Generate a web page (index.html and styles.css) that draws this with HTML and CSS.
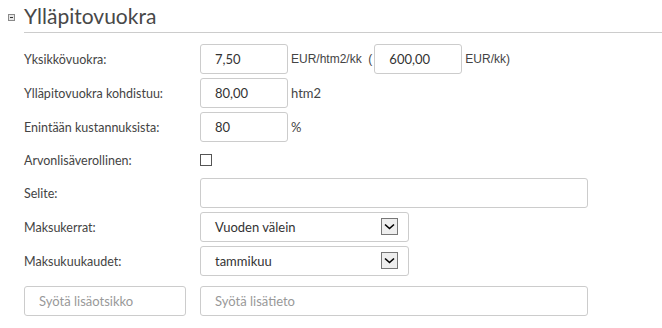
FILE: index.html
```html
<!DOCTYPE html>
<html lang="fi">
<head>
  <meta charset="UTF-8" />
  <title>Ylläpitovuokra</title>
  <link rel="stylesheet" href="styles.css">
</head>
<body>
  <div class="section">
    <div class="section-head">
      <span class="toggle"></span>
      <h2 class="title">Ylläpitovuokra</h2>
    </div>

    <div class="row">
      <label class="label">Yksikkövuokra:</label>
      <input class="field small" type="text" value="7,50">
      <span class="unit plain">EUR/htm2/kk&nbsp;&nbsp;(</span>
      <input class="field small" type="text" value="600,00">
      <span class="unit plain">EUR/kk)</span>
    </div>

    <div class="row">
      <label class="label">Ylläpitovuokra kohdistuu:</label>
      <input class="field small" type="text" value="80,00">
      <span class="unit">htm2</span>
    </div>

    <div class="row">
      <label class="label">Enintään kustannuksista:</label>
      <input class="field small" type="text" value="80">
      <span class="unit">%</span>
    </div>

    <div class="row check-row">
      <label class="label">Arvonlisäverollinen:</label>
      <span class="checkbox"></span>
    </div>

    <div class="row">
      <label class="label">Selite:</label>
      <input class="field wide" type="text">
    </div>

    <div class="row">
      <label class="label">Maksukerrat:</label>
      <div class="field select">
        <span>Vuoden välein</span>
        <span class="arrow"><svg width="11" height="7" viewBox="0 0 11 7"><path d="M1 1.5 L5.5 5.5 L10 1.5" fill="none" stroke="#000" stroke-width="1.6"/></svg></span>
      </div>
    </div>

    <div class="row">
      <label class="label">Maksukuukaudet:</label>
      <div class="field select">
        <span>tammikuu</span>
        <span class="arrow"><svg width="11" height="7" viewBox="0 0 11 7"><path d="M1 1.5 L5.5 5.5 L10 1.5" fill="none" stroke="#000" stroke-width="1.6"/></svg></span>
      </div>
    </div>

    <div class="row extra-row">
      <input class="field extra-title" type="text" placeholder="Syötä lisäotsikko">
      <input class="field wide" type="text" placeholder="Syötä lisätieto">
    </div>
  </div>
</body>
</html>
```

FILE: styles.css
```css
body {
  margin: 0;
  background: #fff;
  font-family: Lato, "Noto Sans", sans-serif;
  color: #333;
}
.section {
  padding: 0 0 0 24px;
}
.section-head {
  display: flex;
  align-items: center;
  margin-left: -16px;
  margin-bottom: 11px;
}
.toggle {
  position: relative;
  width: 5px;
  height: 5px;
  border: 1px solid #8a8a8a;
  background: #e6e6e6;
  margin-right: 9px;
  margin-top: 1px;
}
.toggle::after {
  content: "";
  position: absolute;
  left: 1px;
  right: 1px;
  top: 2px;
  height: 1px;
  background: #333;
}
.title {
  flex: 1;
  margin: 0;
  padding: 3px 0 4px;
  font-size: 21px;
  font-weight: normal;
  color: #484848;
  border-bottom: 1px solid #ccc;
}
.row {
  display: flex;
  align-items: center;
  height: 30px;
  margin-bottom: 4px;
}
.label {
  width: 176px;
  font-size: 12.5px;
  color: #444;
}
.field {
  box-sizing: border-box;
  height: 30px;
  border: 1px solid #ccc;
  border-radius: 3px;
  padding: 0 14px;
  font-family: inherit;
  font-size: 13px;
  color: #333;
  background: #fff;
}
.field::placeholder {
  color: #999;
}
.small {
  width: 88px;
}
.wide {
  width: 388px;
}
.unit {
  font-size: 13px;
  color: #444;
  margin: 0 4px 0 3px;
}
.plain {
  font-family: "Liberation Sans", Arial, sans-serif;
  font-size: 12px;
  white-space: pre;
  margin-right: 2px;
}
.check-row {
  height: 28px;
}
.checkbox {
  width: 10px;
  height: 10px;
  border: 1px solid #555;
  background: #fff;
}
.select {
  width: 209px;
  display: flex;
  align-items: center;
  justify-content: space-between;
  padding-right: 10px;
  margin-top: -1px;
}
.arrow {
  box-sizing: border-box;
  width: 17px;
  height: 17px;
  border: 1px solid #777;
  background: #eee;
  display: flex;
  align-items: center;
  justify-content: center;
}
.extra-row {
  margin-top: 10px;
}
.extra-title {
  width: 162px;
  margin-right: 14px;
}
```
